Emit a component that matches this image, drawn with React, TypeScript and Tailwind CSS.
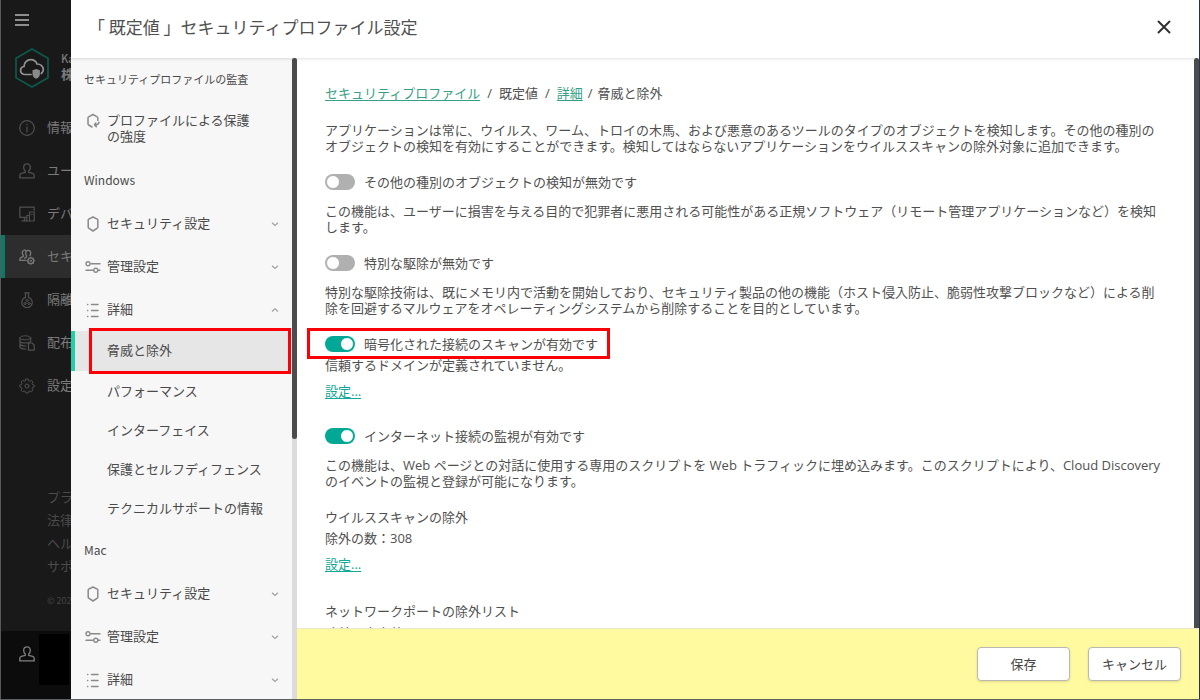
import type { ReactNode } from "react";

const jp = "font-['Noto_Sans_CJK_JP',sans-serif]";
const body = "font-['Open_Sans','Noto_Sans_CJK_JP',sans-serif]";

function Svg({ children, className }: { children: ReactNode; className: string }) {
  return (
    <svg viewBox="0 0 16 16" fill="none" stroke="currentColor" strokeLinecap="round" strokeLinejoin="round" className={className} aria-hidden="true">
      {children}
    </svg>
  );
}

const userShape = (
  <path
    d="M8 .9C6 .9 4.7 2.400 4.700 4.400C4.700 5.900 5.400 7.300 6.300 8.100V9.300L2.400 10.300C1.300 10.600 .8 11.400 .8 12.600V14.900H15.200V12.600C15.200 11.400 14.700 10.600 13.600 10.300L9.700 9.300V8.100C10.600 7.300 11.300 5.900 11.300 4.400C11.300 2.400 10 .9 8 .9Z"
    strokeWidth="1.300"
  />
);

const railItems: { label: string; icon: ReactNode; active?: boolean }[] = [
  {
    label: "情報",
    icon: (
      <>
        <circle cx="8" cy="8" r="7.3" strokeWidth="1.200" />
        <path d="M8 7V12M8 4.200V4.800" strokeWidth="1.200" />
      </>
    ),
  },
  { label: "ユー", icon: userShape },
  {
    label: "デバ",
    icon: (
      <>
        <path d="M7.500 11.300H.8V1.200H15.200V4.500M5.500 11.300V14.700M3 14.800H7.500" strokeWidth="1.200" />
        <rect x="10.500" y="6" width="4.700" height="9" rx=".5" strokeWidth="1.200" />
        <path d="M10.500 9.500H7.800V15H10.500M12.500 8.500H13.200" strokeWidth="1.200" />
      </>
    ),
  },
  {
    label: "セキ",
    active: true,
    icon: (
      <>
        <path d="M6.800 1.300C5.200 .8 3.300 1.600 3.300 3.600C3.300 5 3.700 5.700 4.300 6.400V7.400L1.600 8.800C.9 9.200 .8 9.600 .8 11.400H7" strokeWidth="1.300" />
        <path d="M9.200 1.300C7.500 1.300 6.600 2.300 6.600 4C6.600 5.400 7 6 7.500 6.600V8L5.500 9.200M9.200 1.300C10.900 1.300 11.700 2.300 11.700 4C11.700 5.200 11.400 6 10.900 6.600" strokeWidth="1.300" />
        <circle cx="11.800" cy="11.800" r="2.900" strokeWidth="1.300" />
        <circle cx="11.800" cy="11.800" r=".7" />
        <path d="M11.800 8V8.900M11.800 14.700V15.600M8 11.800H8.900M14.700 11.800H15.600M9.200 9.200L9.800 9.800M13.800 13.800L14.400 14.400M14.400 9.200L13.800 9.800M9.200 14.400L9.800 13.800" />
      </>
    ),
  },
  {
    label: "隔離",
    icon: (
      <>
        <path d="M5.800 .8H10.200M6.500 1V5.400A5.200 5.200 0 1 0 9.500 5.400V1" strokeWidth="1.200" />
        <circle cx="8" cy="8.400" r="1.100" />
        <circle cx="6" cy="11.500" r="1.100" />
        <circle cx="10" cy="11.500" r="1.100" />
      </>
    ),
  },
  {
    label: "配布",
    icon: (
      <>
        <ellipse cx="6.300" cy="2.800" rx="5.400" ry="2" />
        <path d="M.9 2.800V12C.9 13.200 3.800 14 7 14M.9 6C.9 7 3.300 8 6.300 8M.9 9C.9 10 3.800 11 7 11M11.700 2.800V6C11.700 7 9.300 8 6.300 8" strokeWidth="1.200" />
        <path d="M9.500 8H13L15.200 10V15.200H9.500Z" strokeWidth="1.200" />
      </>
    ),
  },
  {
    label: "設定",
    icon: (
      <>
        <circle cx="8" cy="8" r="2" />
        <path d="M6.800 1H9.200L9.700 2.800L11 3.300L12.600 2.400L13.900 3.900L13 5.600L13.500 6.600L15.200 7V9L13.500 9.500L13 10.700L13.900 12.300L12.300 13.800L10.700 12.900L9.700 13.400L9.200 15H6.800L6.300 13.400L5.100 12.900L3.600 13.800L2.100 12.300L3 10.700L2.500 9.500L.8 9V7L2.500 6.600L3 5.400L2.100 3.800L3.600 2.300L5.100 3.200L6.300 2.800Z" />
      </>
    ),
  },
];

function Rail() {
  return (
    <aside className={`${jp} flex w-[71px] shrink-0 flex-col overflow-hidden whitespace-nowrap border-l border-[#565a5e] bg-[#191919] text-[13px] text-[#7b7b7b]`}>
      <button type="button" aria-label="メニュー" className="ml-[14px] mt-[14px] flex h-3 w-[14px] shrink-0 flex-col justify-between">
        <span className="h-[2px] w-full bg-[#8e8e8e]" />
        <span className="h-[2px] w-full bg-[#8e8e8e]" />
        <span className="h-[2px] w-full bg-[#8e8e8e]" />
      </button>
      <div className="mt-[22px] flex h-10 shrink-0 items-center gap-[11px] pl-[13px]">
        <svg viewBox="0 0 36 40" fill="none" className="h-10 w-9 shrink-0" aria-hidden="true">
          <path d="M18 1L34 10.2V29.8L18 39L2 29.8V10.2Z" stroke="#0d5a4b" strokeWidth="1.7" strokeLinejoin="round" />
          <path d="M17 26.500H11C8.500 26.500 6.600 24.800 6.600 22.500C6.600 20.300 8 18.800 10 18.500C10 14.500 13 11.700 16.700 11.700C19.800 11.700 22 13.300 23 16C26 15.800 29.300 18 29.300 21.500C29.300 23.200 28.500 24.500 27.300 25.500" stroke="#949494" strokeWidth="1.700" strokeLinecap="round" />
          <path d="M18.500 22.300L22.200 20.900L25.900 22.300V26C25.900 28.300 24.500 29.800 22.200 30.800C19.900 29.800 18.500 28.300 18.500 26Z" fill="#8a8a8a" />
        </svg>
        <div className="pb-[5px] text-[11px] font-medium leading-4">
          <div>Ka</div>
          <div className="text-[13px] font-bold">株</div>
        </div>
      </div>
      <nav className="mt-[18px]">
        <ul>
          {railItems.map((item) => (
            <li key={item.label} className={item.active ? "bg-[#2d2d2d]" : ""}>
              <a href="#" className={`flex h-[43px] items-center gap-[12px] ${item.active ? "border-l-4 border-[#0f7a63] pl-[14px]" : "pl-[18px]"}`}>
                <Svg className={`size-4 shrink-0 ${item.active ? "text-[#7a7a7a]" : "text-[#505050]"}`}>{item.icon}</Svg>
                <span className="pb-[2px]">{item.label}</span>
              </a>
            </li>
          ))}
        </ul>
      </nav>
      <ul className="mt-[78px] pl-[46px] text-[13px] leading-[23px] text-[#4b4b4b]">
        {["プラ", "法律", "ヘル", "サポ"].map((t) => (
          <li key={t}>
            <a href="#">{t}</a>
          </li>
        ))}
      </ul>
      <p className="mt-4 pl-[46px] text-[9px] leading-4 text-[#444]">© 202</p>
      <div className="mt-auto flex h-[68px] shrink-0 items-start gap-1 bg-[#0c0c0c] pl-[18px] pt-[3px]">
        <Svg className="mt-[12px] size-4 shrink-0 text-[#808080]">{userShape}</Svg>
        <div className="h-[51px] w-[30px] shrink-0 bg-black" />
      </div>
    </aside>
  );
}

const shieldIcon = <path d="M8 1L12.300 3.200C12.600 3.400 12.800 3.700 12.800 4V11.300C12.800 11.700 12.600 12 12.300 12.200L8 15L3.700 12.200C3.400 12 3.200 11.700 3.200 11.300V4C3.200 3.700 3.400 3.400 3.700 3.200Z" strokeWidth="1.500" />;
const profileIcon = (
  <>
    <path d="M7 14L3.600 12C3.200 11.700 3 11.400 3 11V4.700C3 4.300 3.200 4 3.600 3.800L8 1.500L12.200 3.800C12.600 4 12.800 4.300 12.800 4.700V7.500" strokeWidth="1.500" />
    <path d="M14 9.200C13.600 10.800 12.300 12 9.500 12M9.500 12L10.800 10M9.500 12L11.300 13.800" strokeWidth="1.500" />
  </>
);
const slidersIcon = (
  <>
    <circle cx="3" cy="4.800" r="2" strokeWidth="1.400" />
    <path d="M6 4.800H15M1 11.200H8M13 11.200H15" strokeWidth="1.400" />
    <circle cx="10.800" cy="11.200" r="2" strokeWidth="1.400" />
  </>
);
const listIcon = <path d="M2.600 2.500H2.800M6.500 2.500H13M2.600 8.500H2.800M6.500 8.500H13M2.600 14.500H2.800M6.500 14.500H13" strokeWidth="1.500" />;

function Group({ label, icon, open = false }: { label: string; icon: ReactNode; open?: boolean }) {
  return (
    <button type="button" aria-expanded={open} className="flex h-[43px] w-full items-center gap-[6px] pl-[14px] pr-3 text-left">
      <Svg className="size-4 shrink-0 text-[#8a8a8a]">{icon}</Svg>
      <span className="flex-1 pb-[2px]">{label}</span>
      <svg viewBox="0 0 10 10" fill="none" stroke="#a0a0a0" strokeWidth="1.200" className="size-[10px] shrink-0" aria-hidden="true">
        {open ? <path d="M2 6.500L5 3.800L8 6.500" /> : <path d="M2 3.800L5 6.500L8 3.800" />}
      </svg>
    </button>
  );
}

function Sidebar() {
  return (
    <div className={`${jp} flex w-[226px] shrink-0 bg-[#f7f7f7] text-[13px] text-[#4a4a4a]`}>
      <nav className="min-w-0 flex-1 overflow-hidden">
        <h2 className="flex h-[42px] items-center pl-[13px] text-[11px]">セキュリティプロファイルの監査</h2>
        <a href="#" className="flex h-[57px] items-center gap-[6px] pb-[2px] pl-[14px] pr-9 leading-4">
          <Svg className="mt-[13px] size-4 shrink-0 self-start text-[#8a8a8a]">{profileIcon}</Svg>
          プロファイルによる保護の強度
        </a>
        <h2 className="flex h-[45px] items-center pl-[13px] text-xs">Windows</h2>
        <Group label="セキュリティ設定" icon={shieldIcon} />
        <Group label="管理設定" icon={slidersIcon} />
        <Group label="詳細" icon={listIcon} open />
        <ul>
          <li className="relative bg-[#e6e6e6]">
            <a href="#" aria-current="page" className="flex h-10 items-center border-l-4 border-[#1fd0a9] pb-[2px] pl-8">
              脅威と除外
            </a>
            <span className="pointer-events-none absolute -inset-y-[3px] left-[18px] right-px border-[3px] border-[#fb0007]" />
          </li>
          {["パフォーマンス", "インターフェイス", "保護とセルフディフェンス", "テクニカルサポートの情報"].map((t) => (
            <li key={t}>
              <a href="#" className="flex h-[39px] items-center pl-9">
                {t}
              </a>
            </li>
          ))}
        </ul>
        <h2 className="flex h-[45px] items-center pl-[13px] text-xs">Mac</h2>
        <Group label="セキュリティ設定" icon={shieldIcon} />
        <Group label="管理設定" icon={slidersIcon} />
        <Group label="詳細" icon={listIcon} />
      </nav>
      <div className="w-[5px] shrink-0 bg-[#dcdcdc]">
        <div className="h-[59.5%] w-full rounded-full bg-[#4c4c4c]" />
      </div>
    </div>
  );
}

function Toggle({ label, on = false, boxed = false }: { label: string; on?: boolean; boxed?: boolean }) {
  return (
    <div className="mt-5 flex">
      <label className="relative flex h-4 items-center gap-[9px]">
        <input
          type="checkbox"
          role="switch"
          defaultChecked={on}
          className="h-4 w-[30px] shrink-0 appearance-none rounded-full bg-[#b0b0b0] p-px before:block before:size-[14px] before:rounded-full before:border before:border-[#b0b0b0] before:bg-white checked:bg-[#00a895] checked:before:ml-auto checked:before:border-[#00a895]"
        />
        {label}
        {boxed && <span className="pointer-events-none absolute -left-[18px] -right-3 -top-2 h-[31px] border-[3px] border-[#fb0007]" />}
      </label>
    </div>
  );
}

function SettingsLink() {
  return (
    <p className="mt-[10px]">
      <a href="#" className="text-[#12a796] underline underline-offset-2">
        設定...
      </a>
    </p>
  );
}

function Content() {
  return (
    <main className={`${body} min-h-0 flex-1 overflow-hidden bg-white pl-7 pr-[30px] pt-[27px] text-[13px] leading-4 text-[#505050]`}>
      <nav aria-label="パンくず" className="flex">
        <a href="#" className="text-[#35a085] underline underline-offset-2">セキュリティプロファイル</a>
        <span className="mx-[7px]">/</span>
        <span>既定値</span>
        <span className="mx-[7px]">/</span>
        <a href="#" className="text-[#35a085] underline underline-offset-2">詳細</a>
        <span className="mx-[5px]">/</span>
        <span>脅威と除外</span>
      </nav>
      <p className="mt-[21px]">
        アプリケーションは常に、ウイルス、ワーム、トロイの木馬、および悪意のあるツールのタイプのオブジェクトを検知します。その他の種別のオブジェクトの検知を有効にすることができます。検知してはならないアプリケーションをウイルススキャンの除外対象に追加できます。
      </p>
      <Toggle label="その他の種別のオブジェクトの検知が無効です" />
      <p className="mt-[13px]">
        この機能は、ユーザーに損害を与える目的で犯罪者に悪用される可能性がある正規ソフトウェア（リモート管理アプリケーションなど）を検知します。
      </p>
      <Toggle label="特別な駆除が無効です" />
      <p className="mt-[13px]">
        特別な駆除技術は、既にメモリ内で活動を開始しており、セキュリティ製品の他の機能（ホスト侵入防止、脆弱性攻撃ブロックなど）による削除を回避するマルウェアをオペレーティングシステムから削除することを目的としています。
      </p>
      <Toggle label="暗号化された接続のスキャンが有効です" on boxed />
      <p className="mt-[5px]">信頼するドメインが定義されていません。</p>
      <SettingsLink />
      <div className="mt-[29px]">
        <Toggle label="インターネット接続の監視が有効です" on />
      </div>
      <p className="mt-[13px]">
        この機能は、Web ページとの対話に使用する専用のスクリプトを Web トラフィックに埋め込みます。このスクリプトにより、Cloud Discovery のイベントの監視と登録が可能になります。
      </p>
      <h3 className="mt-5">ウイルススキャンの除外</h3>
      <p className="mt-[5px]">除外の数：308</p>
      <SettingsLink />
      <h3 className="mt-[31px]">ネットワークポートの除外リスト</h3>
      <p className="mt-[6px]">除外は未定義です</p>
    </main>
  );
}

export default function App() {
  return (
    <div className="h-screen border-b border-[#5c5e60] bg-[#26354e]">
      <div className="flex h-full pr-px">
        <Rail />
        <div role="dialog" aria-labelledby="dialog-title" className="flex min-w-0 flex-1 flex-col bg-white">
          <header className={`${jp} relative z-10 flex h-[58px] shrink-0 items-center justify-between bg-white pb-1 pl-[17px] pr-7 shadow-[0_1px_3px_rgba(0,0,0,0.12)]`}>
            <h1 id="dialog-title" className="text-[17px] text-[#505050]">「 既定値 」セキュリティプロファイル設定</h1>
            <button type="button" aria-label="閉じる">
              <svg viewBox="0 0 14 14" fill="none" stroke="#2f2f2f" strokeWidth="1.900" strokeLinecap="round" className="size-[14px]" aria-hidden="true">
                <path d="M1.500 1.500L12.500 12.500M12.500 1.500L1.500 12.500" />
              </svg>
            </button>
          </header>
          <div className="flex min-h-0 flex-1">
            <Sidebar />
            <div className="flex min-w-0 flex-1 flex-col">
              <div className="flex min-h-0 flex-1">
                <Content />
                <div className="w-[5px] shrink-0 rounded-t-full bg-[#4c4c4c]" />
              </div>
              <footer className={`${jp} flex h-[71px] shrink-0 items-center justify-end gap-[18px] border-t border-[#e9e7c8] bg-[#fff9a0] pr-[18px] text-[13px] text-[#444]`}>
                <button type="button" className="h-[34px] w-[93px] rounded-[4px] border border-[#b9b9b0] bg-white shadow-sm">保存</button>
                <button type="button" className="h-[34px] w-[93px] rounded-[4px] border border-[#b9b9b0] bg-white shadow-sm">キャンセル</button>
              </footer>
            </div>
          </div>
        </div>
      </div>
    </div>
  );
}
